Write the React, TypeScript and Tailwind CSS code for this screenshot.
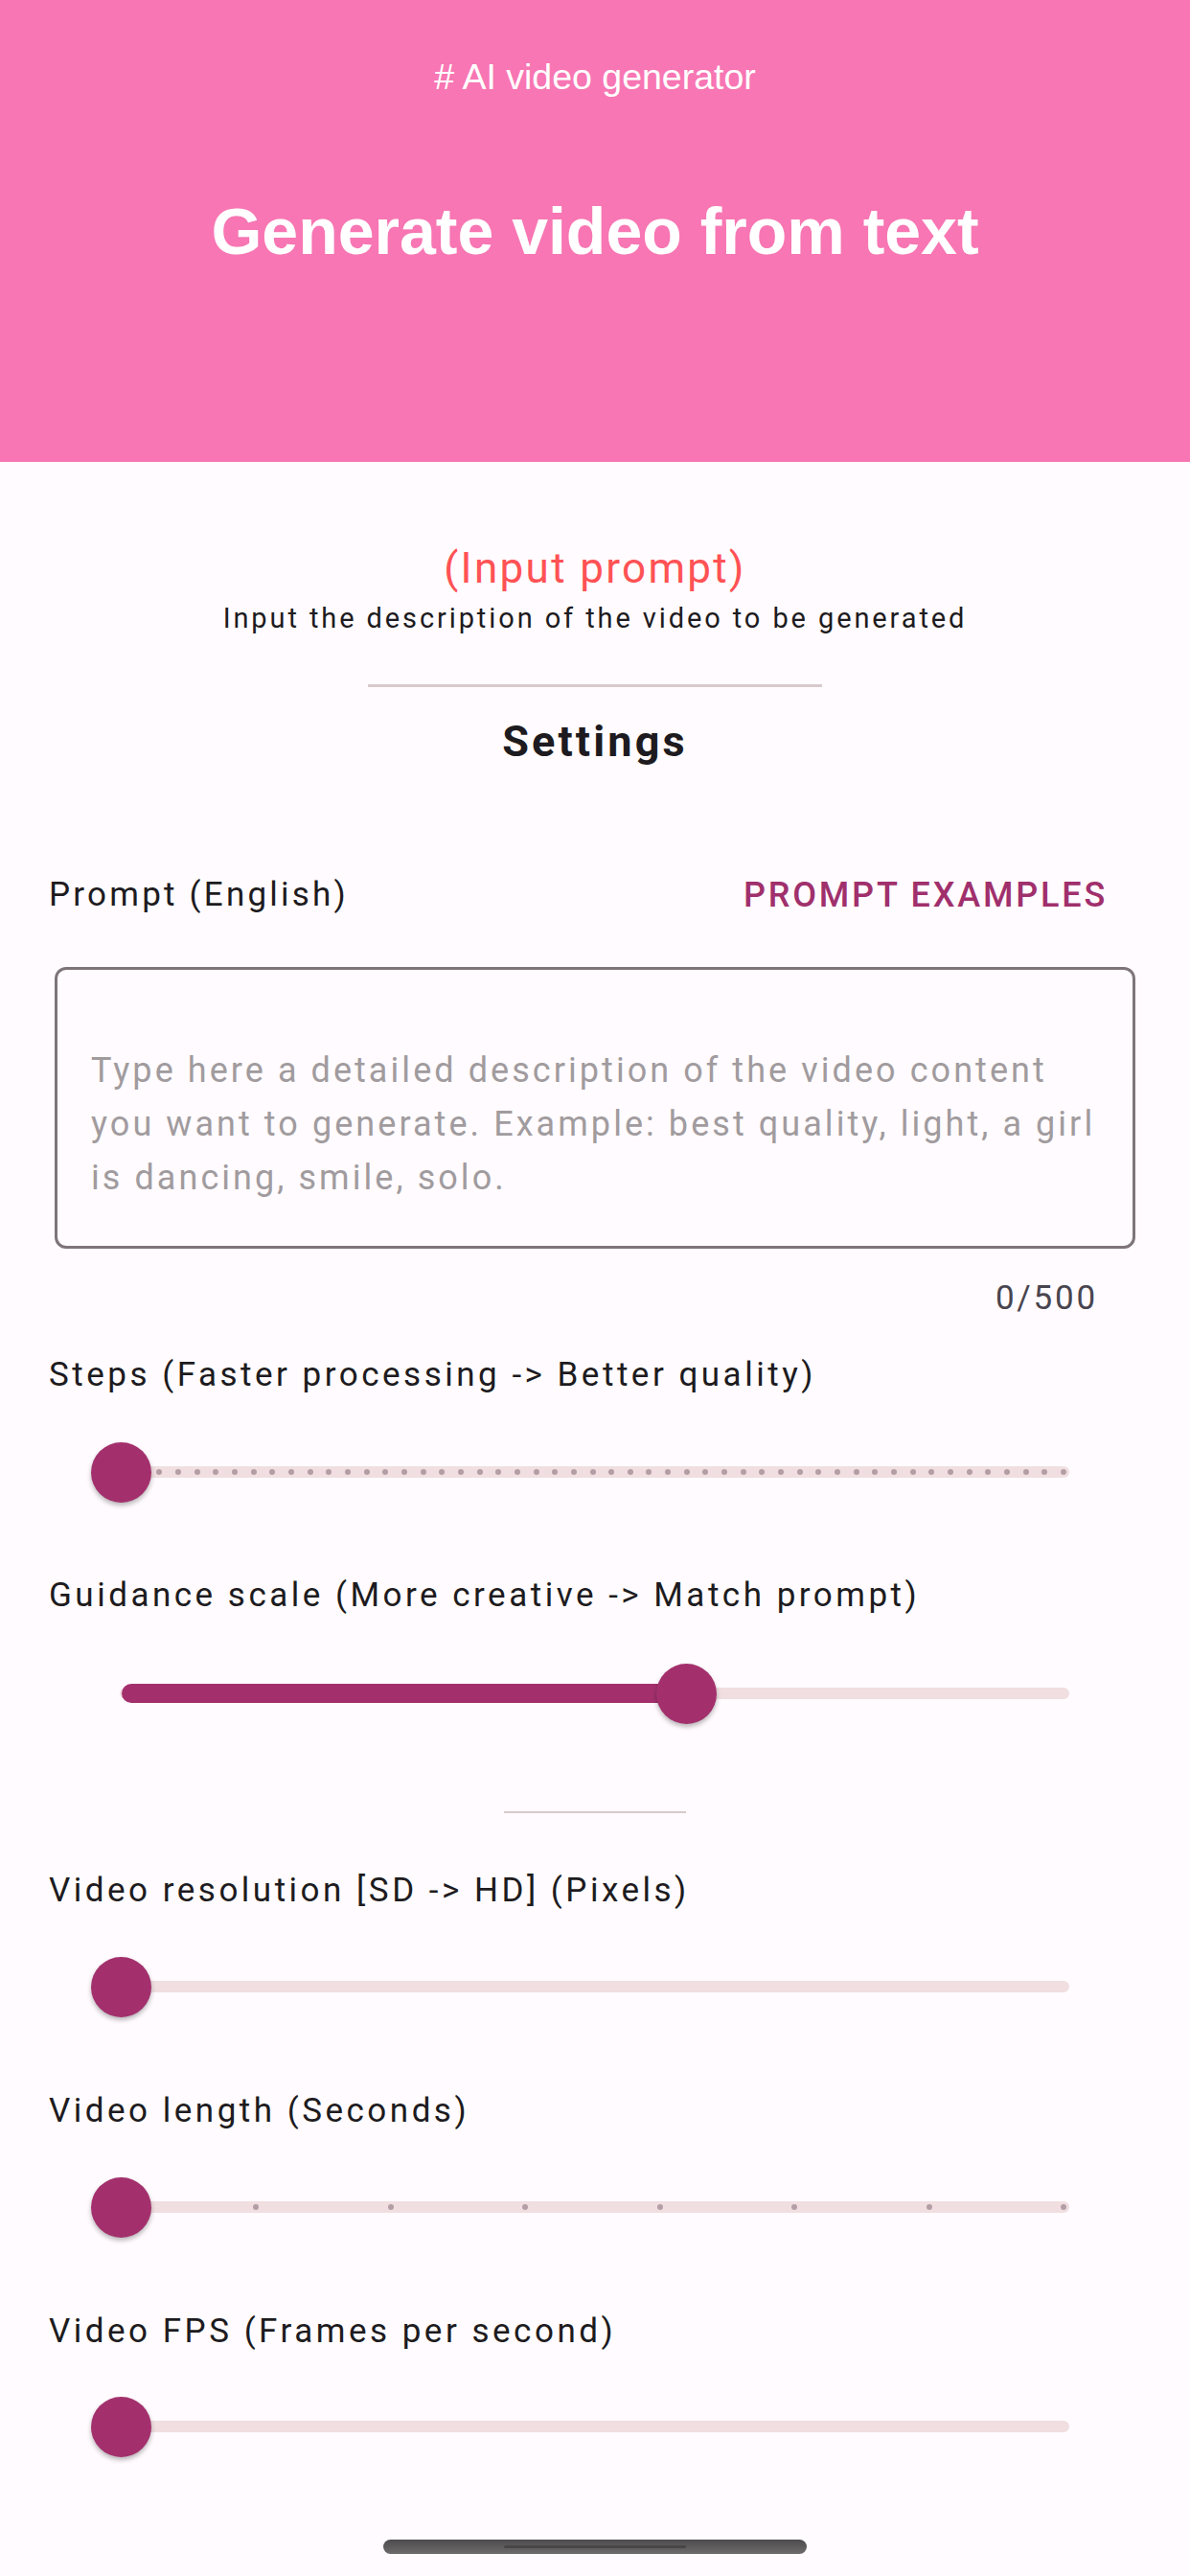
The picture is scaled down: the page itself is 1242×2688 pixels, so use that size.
import React from "react";

const BODY_FONT = { fontFamily: "Roboto, 'Noto Sans', sans-serif" };

type SliderProps = {
  value: number; // 0..1
  ticks?: number; // number of intervals, 0 for a continuous slider
  showActive?: boolean;
};

function Slider({ value, ticks = 0, showActive = false }: SliderProps) {
  // thumb travel runs from x=127 to x=1110 on the page
  const range = 983;
  const thumbX = value * range;
  const tickDots = ticks > 0 ? Array.from({ length: ticks + 1 }, (_, i) => i) : [];
  return (
    <div className="relative ml-[95px] h-[64px] w-[1053px]">
      {/* inactive track */}
      <div className="absolute left-[30px] right-[32px] top-[26px] h-[12px] rounded-full bg-[#F0DEE1]" />
      {/* tick marks */}
      {tickDots.map((i) => (
        <div
          key={i}
          className="absolute top-[29px] h-[6px] w-[6px] rounded-full bg-[#B49EA6]"
          style={{ left: 32 - 3 + (i * range) / ticks }}
        />
      ))}
      {/* active track */}
      {showActive && (
        <div
          className="absolute left-[32px] top-[22px] h-[20px] rounded-full bg-[#A3306D]"
          style={{ width: thumbX + 4 }}
        />
      )}
      {/* thumb */}
      <div
        className="absolute top-[0.5px] h-[63px] w-[63px] rounded-full bg-[#A3306D] shadow-[0_3px_5px_rgba(0,0,0,0.28)]"
        style={{ left: thumbX }}
      />
    </div>
  );
}

function Label({ children, className = "" }: { children: React.ReactNode; className?: string }) {
  return (
    <div
      className={`flex h-[40px] items-center pl-[51px] text-[35px] tracking-[0.1em] text-[#1D1B20] ${className}`}
      style={BODY_FONT}
    >
      {children}
    </div>
  );
}

export default function App() {
  return (
    <div className="flex min-h-[2688px] w-[1242px] flex-col bg-[#FFFBFE]">
      {/* header banner */}
      <header
        className="flex h-[482px] flex-col items-center bg-[#F776B3] text-white"
        style={{ fontFamily: "'Liberation Sans', Arial, sans-serif" }}
      >
        <div className="mt-[55px] flex h-[50px] items-center text-[37.5px]">
          # AI video generator
        </div>
        <div className="mt-[96px] flex h-[80px] items-center text-[68px] font-bold">
          Generate video from text
        </div>
      </header>

      {/* intro */}
      <div className="flex flex-col items-center" style={BODY_FONT}>
        <div className="mt-[81px] flex h-[60px] items-center text-[44px] tracking-[0.053em] text-[#FF5254]">
          (Input prompt)
        </div>
        <div className="mt-[3px] flex h-[40px] items-center text-[29px] tracking-[0.1em] text-[#1D1B20]">
          Input the description of the video to be generated
        </div>
        <div className="mt-[48px] h-[3px] w-[474px] bg-[#D8CACD]" />
        <div className="mt-[27px] flex h-[60px] items-center text-[45px] font-bold tracking-[0.07em] text-[#1D1B20]">
          Settings
        </div>
      </div>

      {/* prompt field */}
      <div className="mt-[105px] flex h-[50px] items-center justify-between pl-[51px] pr-[86px]" style={BODY_FONT}>
        <span className="text-[35px] tracking-[0.092em] text-[#1D1B20]">Prompt (English)</span>
        <span className="text-[36px] font-medium tracking-[0.078em] text-[#A0306C]">PROMPT EXAMPLES</span>
      </div>

      <div
        className="ml-[57px] mt-[50px] h-[294px] w-[1128px] rounded-[12px] border-[3px] border-[#7E7579] pl-[35px] pt-[77px] text-[36px] leading-[56px] tracking-[0.085em] text-[#A19B9E]"
        style={BODY_FONT}
      >
        <div>Type here a detailed description of the video content</div>
        <div>you want to generate. Example: best quality, light, a girl</div>
        <div>is dancing, smile, solo.</div>
      </div>

      <div
        className="mt-[32px] flex h-[40px] items-center justify-end pr-[96px] text-[35px] tracking-[0.08em] text-[#49454F]"
        style={BODY_FONT}
      >
        0/500
      </div>

      {/* generation sliders */}
      <Label className="mt-[40px]">Steps (Faster processing -&gt; Better quality)</Label>
      <div className="mt-[49px]">
        <Slider value={0} ticks={50} />
      </div>

      <Label className="mt-[77px]">Guidance scale (More creative -&gt; Match prompt)</Label>
      <div className="mt-[50px]">
        <Slider value={0.6} showActive />
      </div>

      <div className="mx-auto mt-[91px] h-[2px] w-[190px] bg-[#D8CACD]" />

      <Label className="mt-[61px]">Video resolution [SD -&gt; HD] (Pixels)</Label>
      <div className="mt-[48px]">
        <Slider value={0} />
      </div>

      <Label className="mt-[78px]">Video length (Seconds)</Label>
      <div className="mt-[48px]">
        <Slider value={0} ticks={7} />
      </div>

      <Label className="mt-[78px]">Video FPS (Frames per second)</Label>
      <div className="mt-[47px]">
        <Slider value={0} />
      </div>

      {/* gesture bar */}
      <div className="mx-auto mt-[86px] flex h-[15px] w-[442px] items-center justify-center rounded-full bg-gradient-to-b from-[#4E4B4D] to-[#6E6B6D]">
        <div className="h-[3px] w-[190px] rounded-full bg-[#4A4647]" />
      </div>
    </div>
  );
}
